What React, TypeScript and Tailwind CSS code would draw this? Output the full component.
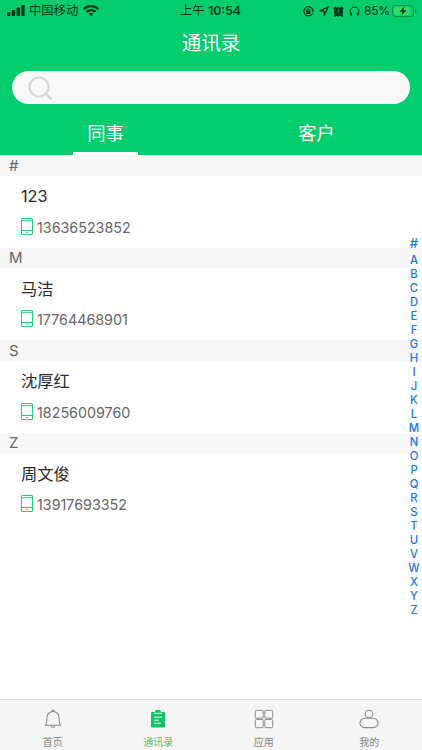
import clsx from 'clsx';

interface Contact {
  letter: string;
  name: string;
  phone: string;
}

const CONTACTS: Contact[] = [
  { letter: '#', name: '123', phone: '13636523852' },
  { letter: 'M', name: '马洁', phone: '17764468901' },
  { letter: 'S', name: '沈厚红', phone: '18256009760' },
  { letter: 'Z', name: '周文俊', phone: '13917693352' }
];

const INDEX_LETTERS = 'ABCDEFGHIJKLMNOPQRSTUVWXYZ'.split('');

function SignalIcon() {
  return (
    <svg className="h-[11px] w-[18px]" viewBox="0 0 18 11" fill="currentColor">
      <rect x="0" y="7" width="3.4" height="4" rx="0.8" />
      <rect x="4.8" y="5" width="3.4" height="6" rx="0.8" />
      <rect x="9.6" y="2.5" width="3.4" height="8.5" rx="0.8" />
      <rect x="14.2" y="0" width="3.4" height="11" rx="0.8" />
    </svg>
  );
}

function WifiIcon() {
  return (
    <svg className="h-[11px] w-[16px]" viewBox="0 0 16 11" fill="none" stroke="currentColor" strokeWidth="2.2">
      <path d="M0.8 4.1a10.3 10.3 0 0 1 14.4 0" />
      <path d="M3.5 6.9a6.4 6.4 0 0 1 9 0" />
      <path d="M8 11L5.7 8.8a3.3 3.3 0 0 1 4.6 0z" fill="currentColor" stroke="none" />
    </svg>
  );
}

function StatusBar() {
  return (
    <div className="flex h-[22px] items-center pl-[7px] pr-[5px] text-[12px] leading-none text-[#06351c]">
      <div className="flex w-[173px] items-center">
        <SignalIcon />
        <span className="ml-[4px] text-[12.3px]">中国移动</span>
        <span className="ml-[5px] flex">
          <WifiIcon />
        </span>
      </div>
      <div className="flex w-[61px] items-center justify-between whitespace-nowrap">
        <span className="text-[12.3px]">上午</span>
        <span className="text-[12.2px] font-semibold">10:54</span>
      </div>
      <div className="ml-auto flex items-center">
        <svg className="h-[11px] w-[11px]" viewBox="0 0 11 11" fill="none" stroke="currentColor">
          <path d="M9.6 7.2A4.6 4.6 0 1 1 10 4.6" strokeWidth="1.1" />
          <path d="M8.2 4.6h2.8L9.8 6.6z" fill="currentColor" stroke="none" />
          <rect x="3.1" y="4.7" width="4.2" height="3.3" fill="currentColor" stroke="none" />
          <path d="M4 5V4a1.2 1.2 0 0 1 2.4 0v1" strokeWidth="0.9" />
        </svg>
        <svg className="ml-[5px] h-[10px] w-[10px]" viewBox="0 0 10 10" fill="none" stroke="currentColor" strokeWidth="1.2" strokeLinejoin="round">
          <path d="M0.8 4.9L9.3 0.8L5.2 9.3V4.9z" />
        </svg>
        <svg className="ml-[4px] h-[11px] w-[11px]" viewBox="0 0 11 11">
          <circle cx="5.5" cy="5.8" r="4.6" fill="currentColor" />
          <path d="M0.7 3L3.1 0.9M10.3 3L7.9 0.9M2.6 9.2L1.4 10.6M8.4 9.2L9.6 10.6" stroke="currentColor" strokeWidth="1.9" />
          <path d="M5.6 3.2V6.1H3.8" fill="none" stroke="#03cd6c" strokeWidth="0.7" />
        </svg>
        <svg className="ml-[5px] h-[11px] w-[11px]" viewBox="0 0 11 11" fill="none" stroke="currentColor">
          <path d="M1.2 8V5.3a4.3 4.3 0 0 1 8.6 0V8" strokeWidth="1" />
          <path d="M2.2 6.4v3.4M8.8 6.4v3.4" strokeWidth="1.8" />
        </svg>
        <span className="ml-[4px] w-[28px] whitespace-nowrap text-[12px] tracking-[-0.2px]">85%</span>
        <svg className="h-[12px] w-[25px]" viewBox="0 0 25 12">
          <rect x="0.5" y="0.5" width="21" height="11" rx="3" fill="none" stroke="#078c4b" />
          <rect x="2" y="2" width="16" height="8" rx="1.6" fill="#32d961" />
          <path d="M23 4v4c1-.3 1.5-1 1.5-2S24 4.3 23 4z" fill="#078c4b" />
          <path d="M12.4 1.5L7.6 6.8h3L9.5 10.6l4.9-5.4h-3z" fill="#06351c" />
        </svg>
      </div>
    </div>
  );
}

function PhoneIcon() {
  return (
    <svg className="h-[17px] w-[12px]" viewBox="0 0 12 17" fill="none" stroke="#2fcb70" strokeWidth="1">
      <rect x="0.5" y="0.5" width="11" height="16" rx="0.5" />
      <path d="M0.5 2.7h11M0.5 12.5h11M5.2 14.5h1.6" />
    </svg>
  );
}

function ContactSection({ contact }: { contact: Contact }) {
  return (
    <section className="h-[92.67px]">
      <h2 className="flex h-[20.5px] items-center bg-[#f7f7f7] pl-[9px] pt-px text-[15px] text-[#666]">
        {contact.letter}
      </h2>
      <div className="pl-[21px]">
        <p className="mt-[9.5px] h-[22px] text-[16.3px] leading-[22px] text-[#282828]">{contact.name}</p>
        <div className="mt-[9px] flex h-[20px] items-center">
          <PhoneIcon />
          <span className="ml-[4px] mt-[3px] text-[14.3px] leading-[20px] text-[#666]">{contact.phone}</span>
        </div>
      </div>
    </section>
  );
}

function LetterIndex() {
  return (
    <nav className="absolute right-0 top-[236px] flex w-[16px] flex-col items-center text-[11.3px] font-medium text-[#1b77e6]">
      <span className="h-[16.5px] text-[13px] leading-[15px]">#</span>
      {INDEX_LETTERS.map((letter) => (
        <span key={letter} className="h-[14.04px] leading-[14px]">
          {letter}
        </span>
      ))}
    </nav>
  );
}

function BellIcon() {
  return (
    <svg className="h-[20px] w-[20px]" viewBox="0 0 20 20" fill="none" stroke="#8c8c8c" strokeWidth="1.1">
      <path d="M2.2 16.3C3.7 15.2 4 13.5 4 8.5a6 6 0 0 1 12 0c0 5 .3 6.7 1.8 7.8z" strokeLinejoin="round" />
      <path d="M8.7 2.4a1.3 1.3 0 0 1 2.6 0M8 16.5a2 1.8 0 0 0 4 0" />
    </svg>
  );
}

function ClipboardIcon() {
  return (
    <svg className="h-[20px] w-[20px]" viewBox="0 0 20 20">
      <path d="M4 3h3a3 2.2 0 0 1 6 0h3a1 1 0 0 1 1 1v13.5a1 1 0 0 1-1 1H4a1 1 0 0 1-1-1V4a1 1 0 0 1 1-1z" fill="#13c467" />
      <path d="M6 4.3h8M6 8.2h8M6 11.2h5M6 14.2h7" stroke="#f5f5f5" strokeWidth="1" />
    </svg>
  );
}

function GridIcon() {
  return (
    <svg className="h-[20px] w-[20px]" viewBox="0 0 20 20" fill="none" stroke="#8c8c8c" strokeWidth="1">
      <rect x="1.3" y="1.3" width="7.9" height="7.9" rx="1" />
      <rect x="10.8" y="1.3" width="7.9" height="7.9" rx="1" />
      <rect x="1.3" y="10.4" width="7.9" height="8.3" rx="1" />
      <rect x="10.8" y="10.4" width="7.9" height="8.3" rx="1" />
    </svg>
  );
}

function UserIcon() {
  return (
    <svg className="h-[20px] w-[20px]" viewBox="0 0 20 20" fill="none" stroke="#8c8c8c" strokeWidth="1.1">
      <circle cx="10" cy="5" r="3.8" />
      <rect x="1" y="9.2" width="18" height="9.4" rx="4.7" />
    </svg>
  );
}

const TABS = [
  { label: '首页', icon: BellIcon },
  { label: '通讯录', icon: ClipboardIcon, active: true },
  { label: '应用', icon: GridIcon },
  { label: '我的', icon: UserIcon }
];

function TabBar() {
  return (
    <nav className="grid h-[51px] grid-cols-4 border-t border-[#dcdcdc] bg-[#f5f5f5]">
      {TABS.map(({ label, icon: Icon, active }) => (
        <button key={label} type="button" className="flex flex-col items-center pt-[9px]">
          <Icon />
          <span className={clsx('mt-[6px] text-[10px] leading-[14px]', active ? 'text-[#62bd68]' : 'text-[#858585]')}>
            {label}
          </span>
        </button>
      ))}
    </nav>
  );
}

export default function App() {
  return (
    <div className="relative flex h-[750px] w-[422px] flex-col overflow-hidden bg-white font-['Inter','Noto_Sans_CJK_SC',sans-serif]">
      <header className="h-[155px] bg-[#03cd6c] text-white">
        <StatusBar />
        <h1 className="h-[49px] text-center text-[19.5px] leading-[43px]">通讯录</h1>
        <div className="mx-[12px] flex h-[33px] items-center rounded-full bg-[#f8f8f8] pl-[16px] pt-px">
          <svg className="h-[25px] w-[25px]" viewBox="0 0 25 25" fill="none" stroke="#d8d8d8" strokeWidth="2.2">
            <circle cx="11" cy="11" r="9.5" />
            <path d="M18 18l5.5 5.5" strokeWidth="2.6" />
          </svg>
        </div>
        <div className="grid h-[51px] grid-cols-2 text-[18.3px] leading-[36px]">
          <div className="flex flex-col items-center justify-between pt-[11px]">
            <span>同事</span>
            <span className="h-[3px] w-[65px] bg-white" />
          </div>
          <div className="flex flex-col items-center pt-[11px]">
            <span>客户</span>
          </div>
        </div>
      </header>

      <main className="flex-1">
        {CONTACTS.map((contact) => (
          <ContactSection key={contact.letter} contact={contact} />
        ))}
      </main>

      <LetterIndex />
      <TabBar />
    </div>
  );
}
